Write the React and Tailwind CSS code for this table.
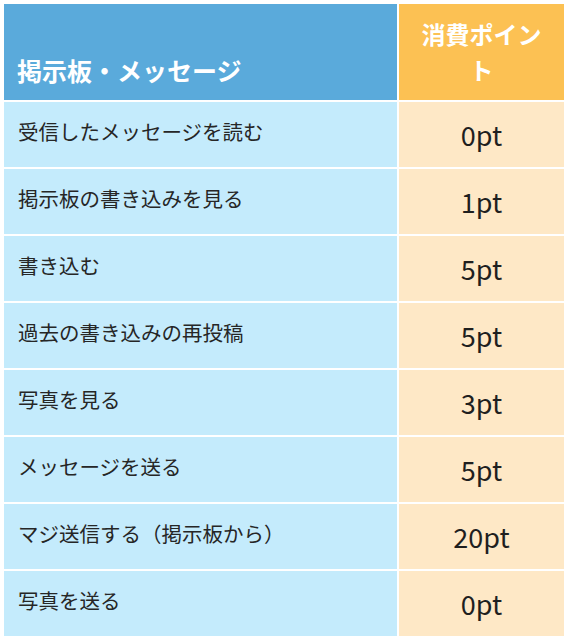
import React from "react";

const rows = [
  ["受信したメッセージを読む", "0pt"],
  ["掲示板の書き込みを見る", "1pt"],
  ["書き込む", "5pt"],
  ["過去の書き込みの再投稿", "5pt"],
  ["写真を見る", "3pt"],
  ["メッセージを送る", "5pt"],
  ["マジ送信する（掲示板から）", "20pt"],
  ["写真を送る", "0pt"],
];

const App = () => {
  return (
    <div
      className="w-[570px] h-[639px] bg-white p-[4px]"
      style={{ fontFamily: '"Noto Sans CJK JP", "Noto Sans", sans-serif' }}
    >
      <div className="grid grid-cols-[393px_165px] gap-[2px]">
        {/* Header */}
        <div className="h-[96px] bg-[#5aaadb] flex items-end px-[13px] pb-[12px]">
          <span className="text-[25px] leading-[36px] font-bold text-white">掲示板・メッセージ</span>
        </div>
        <div className="h-[96px] bg-[#fcc153] flex items-center justify-center px-[12px]">
          <span className="text-[24px] leading-[36px] font-bold text-white text-center">消費ポイント</span>
        </div>

        {/* Rows */}
        {rows.map(([label, pt], i) => (
          <React.Fragment key={i}>
            <div className="h-[65px] bg-[#c4ebfc] px-[14px] pt-[14px]">
              <span className="text-[20.5px] leading-[30px] text-[#262626]">{label}</span>
            </div>
            <div className="h-[65px] bg-[#fee8c6] flex items-center justify-center">
              <span className="text-[27px] leading-[32px] text-[#1f1f1f]">{pt}</span>
            </div>
          </React.Fragment>
        ))}
      </div>
    </div>
  );
};

export default App;
